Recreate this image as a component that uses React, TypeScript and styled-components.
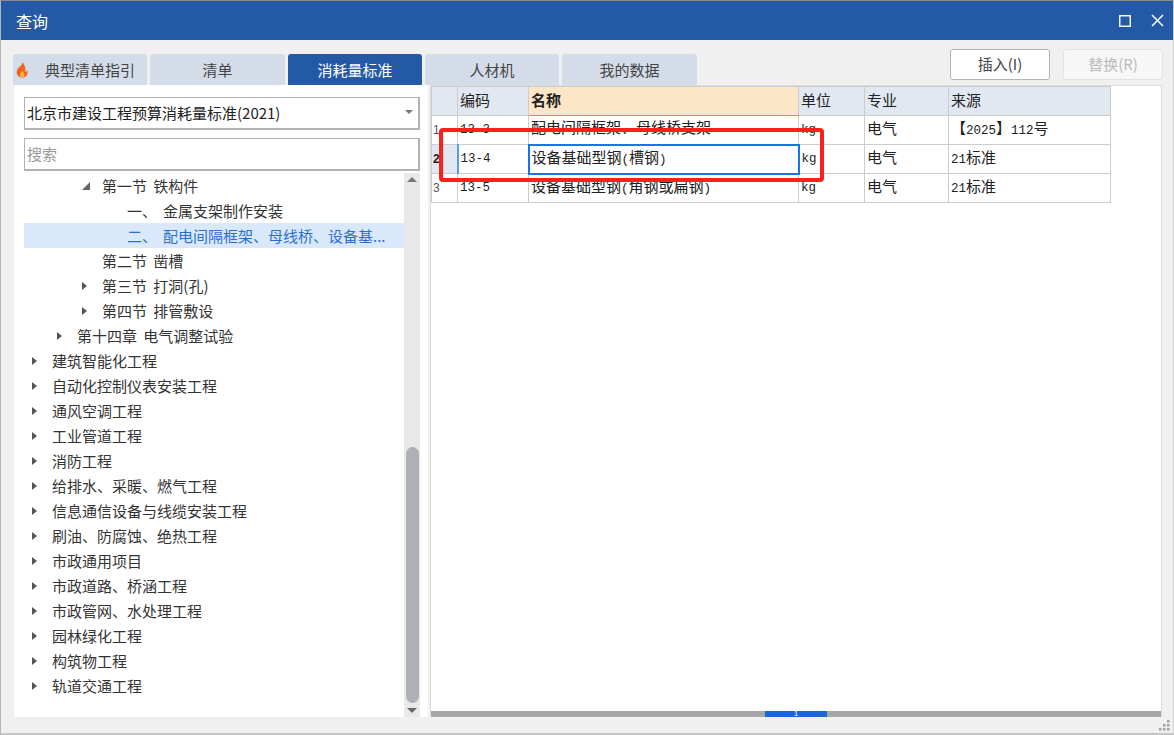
import React from 'react';
import styled, { createGlobalStyle } from 'styled-components';

const cjk = `"Noto Sans CJK SC", "Liberation Sans", sans-serif`;
const gridFont = `"Liberation Mono", "Noto Sans CJK SC", monospace`;

const GlobalStyle = createGlobalStyle`
	html, body {
		margin: 0;
		padding: 0;
		background: #f0f0f0;
	}
	* {
		box-sizing: border-box;
	}
`;

const Window = styled.div`
	position: relative;
	width: 1174px;
	height: 735px;
	display: flex;
	flex-direction: column;
	background: #f0f0f0;
	border-top: 1px solid #8d8d8d;
	border-left: 1px solid #b5b5b5;
	border-right: 1px solid #d0d0d0;
	border-bottom: 2px solid #c4c4c4;
	font-family: ${cjk};
	overflow: hidden;
`;

const TitleBar = styled.header`
	height: 39px;
	flex: none;
	display: flex;
	align-items: center;
	justify-content: space-between;
	padding: 0 9px 0 15px;
	background: #245aa5;
	color: #fff;
	font-size: 16px;
`;

const WindowControls = styled.div`
	display: flex;
	align-items: center;
	gap: 20px;
`;

const TopRow = styled.div`
	height: 45px;
	flex: none;
	display: flex;
	align-items: flex-end;
	justify-content: space-between;
	padding: 0 10px 0 12px;
`;

const Tabs = styled.nav`
	display: flex;
	gap: 3px;
`;

const Tab = styled.div<{ $active?: boolean; $width: number }>`
	position: relative;
	width: ${(props) => props.$width}px;
	height: 31px;
	display: flex;
	align-items: center;
	justify-content: center;
	padding-bottom: 1px;
	border-radius: 3px 3px 0 0;
	background: ${(props) => (props.$active ? '#245aa5' : '#d5dce9')};
	color: ${(props) => (props.$active ? '#fff' : '#444')};
	font-size: 15px;
	white-space: nowrap;
`;

const TabIcon = styled.svg`
	position: absolute;
	left: 1px;
	top: 7px;
`;

const FirstTabLabel = styled.span`
	margin-left: 20px;
`;

const Actions = styled.div`
	display: flex;
	gap: 13px;
	align-self: flex-start;
	margin-top: 9px;
`;

const ActionButton = styled.button<{ $disabled?: boolean }>`
	width: 100px;
	height: 31px;
	padding: 0 0 2px;
	border-radius: 3px;
	border: 1px solid ${(props) => (props.$disabled ? '#e3e3e3' : '#b4b4b4')};
	background: ${(props) => (props.$disabled ? '#f7f7f7' : '#fff')};
	color: ${(props) => (props.$disabled ? '#bbb' : '#444')};
	font-family: ${cjk};
	font-size: 15px;
`;

const Panels = styled.main`
	flex: 1;
	min-height: 0;
	display: grid;
	grid-template-columns: 414px 732px;
	gap: 2px;
	padding: 0 0 0 13px;
`;

const LeftPanel = styled.section`
	display: flex;
	flex-direction: column;
	background: #fff;
	padding: 12px 8px 0 10px;
	min-height: 0;
`;

const SelectBox = styled.div`
	height: 33px;
	flex: none;
	display: flex;
	align-items: center;
	justify-content: space-between;
	padding: 0 5px 2px 2px;
	border: 2px solid #b2b2b2;
	border-width: 1px 2px 2px 1px;
	color: #222;
	font-size: 15px;
`;

const Caret = styled.span`
	width: 0;
	height: 0;
	border-left: 4px solid transparent;
	border-right: 4px solid transparent;
	border-top: 4px solid #777;
`;

const SearchBox = styled.div`
	height: 33px;
	flex: none;
	margin-top: 8px;
	display: flex;
	align-items: center;
	padding: 0 2px 1px;
	border: 1px solid #b2b2b2;
	border-width: 1px 2px 2px 1px;
	color: #999;
	font-size: 15px;
`;

const TreeArea = styled.div`
	flex: 1;
	min-height: 0;
	display: flex;
	margin-top: 2px;
`;

const TreeList = styled.ul`
	flex: 1;
	min-width: 0;
	list-style: none;
	margin: 0;
	padding: 0;
`;

const TreeRow = styled.li<{ $indent: number; $selected?: boolean }>`
	height: 25px;
	display: flex;
	align-items: center;
	padding-left: ${(props) => props.$indent}px;
	background: ${(props) => (props.$selected ? '#d9e8fb' : 'transparent')};
	color: ${(props) => (props.$selected ? '#2b6fd1' : '#333')};
	font-size: 15px;
	word-spacing: 3px;
	white-space: nowrap;
`;

const Arrow = styled.span`
	width: 20px;
	flex: none;
	display: flex;
	align-items: center;
`;

const ClosedGlyph = styled.i`
	width: 0;
	height: 0;
	border-top: 4px solid transparent;
	border-bottom: 4px solid transparent;
	border-left: 5px solid #555;
`;

const OpenGlyph = styled.i`
	width: 0;
	height: 0;
	border-bottom: 8px solid #666;
	border-left: 8px solid transparent;
`;

const ItemMark = styled.span`
	width: 36px;
	flex: none;
`;

const ScrollTrack = styled.div`
	width: 16px;
	flex: none;
	display: flex;
	flex-direction: column;
	align-items: center;
	padding: 4px 0 4px;
	background: #e9e9e9;
`;

const ArrowUp = styled.span`
	width: 0;
	height: 0;
	border-left: 5px solid transparent;
	border-right: 5px solid transparent;
	border-bottom: 5px solid #777;
`;

const ArrowDown = styled.span`
	width: 0;
	height: 0;
	margin-top: 5px;
	border-left: 5px solid transparent;
	border-right: 5px solid transparent;
	border-top: 5px solid #666;
`;

const ScrollThumb = styled.div`
	width: 13px;
	height: 256px;
	margin-top: auto;
	border-radius: 7px;
	background: #aeb2b8;
`;

const RightPanel = styled.section`
	position: relative;
	display: flex;
	flex-direction: column;
	background: #fff;
	border: 1px solid #dcdcdc;
	border-bottom: none;
	min-height: 0;
`;

const GridArea = styled.div`
	flex: 1;
	min-height: 0;
`;

const Grid = styled.table`
	table-layout: fixed;
	width: 680px;
	border-collapse: collapse;
	font-family: ${gridFont};
	font-size: 15px;
	color: #222;
`;

const HeadCell = styled.th<{ $active?: boolean }>`
	height: 29px;
	padding: 0 1px 3px 2px;
	text-align: left;
	font-family: ${cjk};
	font-weight: ${(props) => (props.$active ? 700 : 400)};
	background: ${(props) => (props.$active ? '#fde6c8' : '#e2e8f1')};
	border: 1px solid #ccc;
	border-bottom: ${(props) => (props.$active ? '1px solid #6fa8e8' : '1px solid #ccc')};
`;

const RowHead = styled.td<{ $active?: boolean }>`
	height: 29px;
	padding: 0 0 0 1px;
	font-family: "Liberation Sans", sans-serif;
	font-size: 12px;
	font-weight: ${(props) => (props.$active ? 700 : 400)};
	color: ${(props) => (props.$active ? '#222' : '#555')};
	background: ${(props) => (props.$active ? '#e2e8f1' : '#fff')};
	border: 1px solid #ccc;
	border-right: ${(props) => (props.$active ? '2px solid #5a9bec' : '1px solid #ccc')};
`;

const Cell = styled.td<{ $focused?: boolean }>`
	height: 29px;
	padding: 0 2px 5px;
	white-space: nowrap;
	overflow: hidden;
	border: ${(props) => (props.$focused ? '2px solid #1a73e8' : '1px solid #ccc')};
`;

const LatinCell = styled(Cell)`
	padding: 0 2px 1px;
	font-size: 12.5px;
`;

const Latin = styled.span`
	font-size: 12.5px;
`;

const Highlight = styled.div`
	position: absolute;
	left: 8px;
	top: 42px;
	width: 385px;
	height: 54px;
	border: 4px solid #fb2118;
	border-radius: 4px;
	pointer-events: none;
`;

const HScroll = styled.div`
	height: 6px;
	flex: none;
	display: flex;
	background: #a6a6a8;
	padding-left: 334px;
`;

const HThumb = styled.div`
	width: 62px;
	display: flex;
	align-items: center;
	justify-content: center;
	background: #1a66d2;
	color: #fff;
	font-family: "Liberation Sans", sans-serif;
	font-size: 8px;
	line-height: 6px;
`;

const Footer = styled.footer`
	height: 16px;
	flex: none;
	display: flex;
	justify-content: flex-end;
	align-items: flex-end;
	padding: 0 3px 2px 0;
`;

type TreeItem = {
	label: string;
	indent: number;
	arrow?: 'open' | 'closed';
	mark?: string;
	selected?: boolean;
};

const treeItems: TreeItem[] = [
	{ label: '第一节 铁构件', indent: 58, arrow: 'open' },
	{ label: '金属支架制作安装', indent: 103, mark: '一、' },
	{ label: '配电间隔框架、母线桥、设备基...', indent: 103, mark: '二、', selected: true },
	{ label: '第二节 凿槽', indent: 78 },
	{ label: '第三节 打洞(孔)', indent: 58, arrow: 'closed' },
	{ label: '第四节 排管敷设', indent: 58, arrow: 'closed' },
	{ label: '第十四章 电气调整试验', indent: 33, arrow: 'closed' },
	...[
		'建筑智能化工程',
		'自动化控制仪表安装工程',
		'通风空调工程',
		'工业管道工程',
		'消防工程',
		'给排水、采暖、燃气工程',
		'信息通信设备与线缆安装工程',
		'刷油、防腐蚀、绝热工程',
		'市政通用项目',
		'市政道路、桥涵工程',
		'市政管网、水处理工程',
		'园林绿化工程',
		'构筑物工程',
		'轨道交通工程',
	].map((label): TreeItem => ({ label, indent: 8, arrow: 'closed' })),
];

const columns = [26, 71, 270, 66, 84, 162];

const rows = [
	{ no: '1', code: '13-3', name: '配电间隔框架、母线桥支架', unit: 'kg', major: '电气', source: <>【<Latin>2025</Latin>】<Latin>112</Latin>号</> },
	{ no: '2', code: '13-4', name: <>设备基础型钢<Latin>(</Latin>槽钢<Latin>)</Latin></>, unit: 'kg', major: '电气', source: <><Latin>21</Latin>标准</>, active: true },
	{ no: '3', code: '13-5', name: <>设备基础型钢<Latin>(</Latin>角钢或扁钢<Latin>)</Latin></>, unit: 'kg', major: '电气', source: <><Latin>21</Latin>标准</> },
];

function Flame() {
	return (
		<TabIcon width="16" height="18" viewBox="0 0 16 18">
			<path d="M8.5 1c.6 3-3.6 4.600-5.200 7.600C1.700 11.800 3.500 16.500 8 16.500s6.500-3.900 5.300-7.300c-.5 1-1.200 1.600-2 1.800C11.800 7.500 11 3.500 8.500 1z" fill="#f0641e" />
			<path d="M8 9.500c.3 1.500-2 2.400-2 4.300 0 1.500 1 2.700 2.200 2.700 1.400 0 2.400-1.200 2.300-2.800C10.400 12 9 10.800 8 9.500z" fill="#fbb040" />
		</TabIcon>
	);
}

function ResizeGrip() {
	const dots = [[9, 1], [5, 5], [9, 5], [1, 9], [5, 9], [9, 9]];
	return (
		<svg width="12" height="12" viewBox="0 0 12 12">
			{dots.map(([x, y]) => (
				<rect key={`${x}-${y}`} x={x} y={y} width="2.500" height="2.500" fill="#a0a0a0" />
			))}
		</svg>
	);
}

function App() {
	return (
		<>
			<GlobalStyle />
			<Window>
				<TitleBar>
					<span>查询</span>
					<WindowControls>
						<svg width="12" height="12" viewBox="0 0 12 12">
							<rect x="0.750" y="0.750" width="10.500" height="10.500" fill="none" stroke="#fff" strokeWidth="1.400" />
						</svg>
						<svg width="13" height="13" viewBox="0 0 13 13">
							<path d="M1 1l11 11M12 1L1 12" stroke="#fff" strokeWidth="1.500" fill="none" />
						</svg>
					</WindowControls>
				</TitleBar>
				<TopRow>
					<Tabs>
						<Tab $width={134}>
							<Flame />
							<FirstTabLabel>典型清单指引</FirstTabLabel>
						</Tab>
						<Tab $width={135}>清单</Tab>
						<Tab $width={134} $active>消耗量标准</Tab>
						<Tab $width={134}>人材机</Tab>
						<Tab $width={135}>我的数据</Tab>
					</Tabs>
					<Actions>
						<ActionButton>插入(I)</ActionButton>
						<ActionButton $disabled>替换(R)</ActionButton>
					</Actions>
				</TopRow>
				<Panels>
					<LeftPanel>
						<SelectBox>
							<span>北京市建设工程预算消耗量标准(2021)</span>
							<Caret />
						</SelectBox>
						<SearchBox>搜索</SearchBox>
						<TreeArea>
							<TreeList>
								{treeItems.map((item) => (
									<TreeRow key={item.label} $indent={item.indent} $selected={item.selected}>
										{item.arrow && (
											<Arrow>
												{item.arrow === 'open' ? <OpenGlyph /> : <ClosedGlyph />}
											</Arrow>
										)}
										{item.mark && <ItemMark>{item.mark}</ItemMark>}
										{item.label}
									</TreeRow>
								))}
							</TreeList>
							<ScrollTrack>
								<ArrowUp />
								<ScrollThumb />
								<ArrowDown />
							</ScrollTrack>
						</TreeArea>
					</LeftPanel>
					<RightPanel>
						<GridArea>
							<Grid>
								<colgroup>
									{columns.map((width, index) => (
										<col key={index} width={width} />
									))}
								</colgroup>
								<thead>
									<tr>
										<HeadCell />
										<HeadCell>编码</HeadCell>
										<HeadCell $active>名称</HeadCell>
										<HeadCell>单位</HeadCell>
										<HeadCell>专业</HeadCell>
										<HeadCell>来源</HeadCell>
									</tr>
								</thead>
								<tbody>
									{rows.map((row) => (
										<tr key={row.no}>
											<RowHead $active={row.active}>{row.no}</RowHead>
											<LatinCell>{row.code}</LatinCell>
											<Cell $focused={row.active}>{row.name}</Cell>
											<LatinCell>{row.unit}</LatinCell>
											<Cell>{row.major}</Cell>
											<Cell>{row.source}</Cell>
										</tr>
									))}
								</tbody>
							</Grid>
						</GridArea>
						<Highlight />
						<HScroll>
							<HThumb>1</HThumb>
						</HScroll>
					</RightPanel>
				</Panels>
				<Footer>
					<ResizeGrip />
				</Footer>
			</Window>
		</>
	);
}

export default App;
